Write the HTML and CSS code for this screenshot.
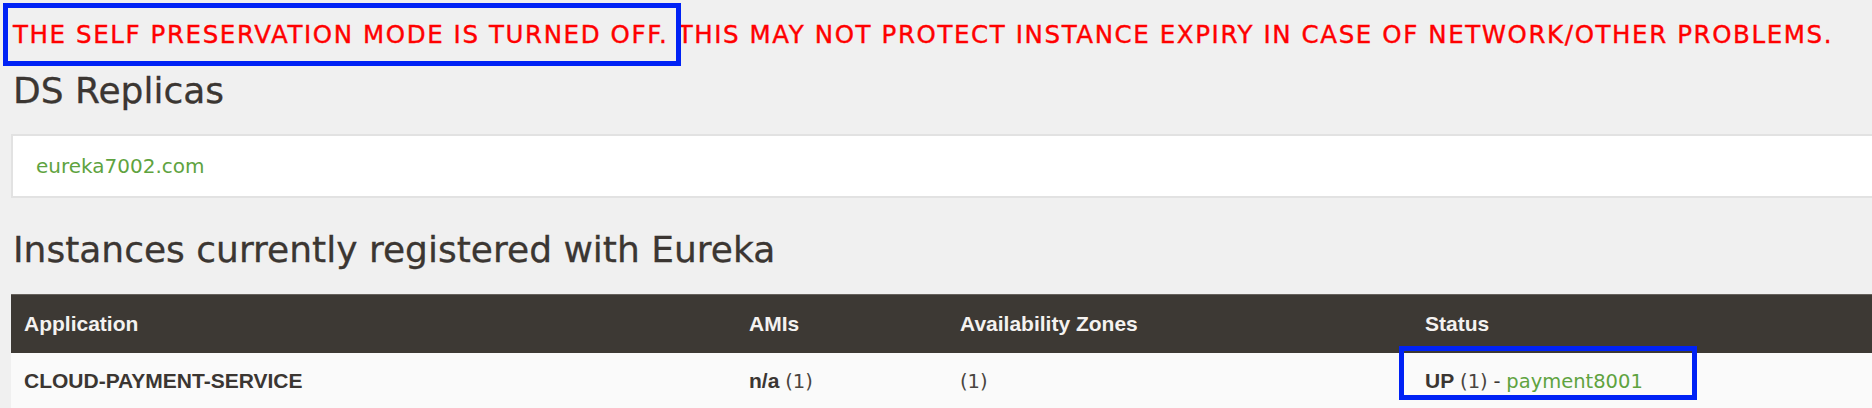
FILE: index.html
```html
<!DOCTYPE html>
<html lang="en">
<head>
<meta charset="utf-8">
<title>Eureka</title>
<link rel="stylesheet" href="styles.css">
</head>
<body>
<div class="page">
  <p class="warning"><span class="mark">THE SELF PRESERVATION MODE IS TURNED OFF.</span> THIS MAY NOT PROTECT INSTANCE EXPIRY IN CASE OF NETWORK/OTHER PROBLEMS.</p>
  <h2 class="title title-replicas">DS Replicas</h2>
  <ul class="replicas">
    <li><a class="link" href="#">eureka7002.com</a></li>
  </ul>
  <h2 class="title title-instances">Instances currently registered with Eureka</h2>
  <table class="instances">
    <colgroup>
      <col class="c-app">
      <col class="c-ami">
      <col class="c-zone">
      <col class="c-status">
    </colgroup>
    <thead>
      <tr>
        <th>Application</th>
        <th>AMIs</th>
        <th>Availability Zones</th>
        <th>Status</th>
      </tr>
    </thead>
    <tbody>
      <tr>
        <td><b>CLOUD-PAYMENT-SERVICE</b></td>
        <td><b>n/a</b> <span class="count">(1)</span></td>
        <td><span class="count">(1)</span></td>
        <td><span class="mark mark-status"><b>UP</b> <span class="count">(1)</span> - <a class="link link-instance" href="#">payment8001</a></span></td>
      </tr>
    </tbody>
  </table>
</div>
</body>
</html>
```

FILE: styles.css
```css
html, body {
  margin: 0;
  padding: 0;
  background: #f0f0f0;
  overflow: hidden;
}

.page {
  width: 1920px;
  padding-left: 11px;
  color: #3b3632;
  font-family: "DejaVu Sans", "Liberation Sans", sans-serif;
}

.warning {
  margin: 0;
  padding-top: 20px;
  padding-left: 2px;
  font-size: 24.5px;
  line-height: 30px;
  letter-spacing: 1.6px;
  color: #ff0000;
  -webkit-text-stroke: 0.4px #ff0000;
  white-space: nowrap;
}

.mark {
  position: relative;
}

.mark::after {
  content: "";
  position: absolute;
  border: 5px solid #0022f5;
  pointer-events: none;
}

.warning .mark::after {
  left: -10px;
  right: -13px;
  top: -17px;
  bottom: -17px;
}

.title {
  margin: 0;
  padding-left: 2px;
  font-size: 36px;
  font-weight: normal;
  line-height: 44px;
  color: #3b3632;
  -webkit-text-stroke: 0.3px #3b3632;
}

.title-replicas {
  margin-top: 19px;
}

.replicas {
  list-style: none;
  margin: 21px 0 0;
  padding: 0 0 0 23px;
  height: 60px;
  display: flex;
  align-items: center;
  background: #ffffff;
  border: 2px solid #e2e2e2;
  border-right: none;
}

.replicas li {
  font-size: 20px;
}

.link {
  color: #5fa33f;
  text-decoration: none;
}

.title-instances {
  margin-top: 30px;
}

.instances {
  margin-top: 22px;
  width: 1909px;
  border-collapse: collapse;
  table-layout: fixed;
  font-family: "Liberation Sans", Arial, sans-serif;
  font-size: 21px;
}

.c-app { width: 725px; }
.c-ami { width: 211px; }
.c-zone { width: 465px; }

.instances th {
  background: #3d3934;
  color: #f4f2f0;
  text-align: left;
  font-weight: bold;
  height: 58px;
  padding: 0 13px;
  border-top: 1px solid #66615c;
}

.instances td {
  background: #fafafa;
  height: 56px;
  padding: 0 13px;
  color: #3b3632;
}

.count {
  font-family: "DejaVu Sans", sans-serif;
  font-size: 19.5px;
  color: #4a4540;
}

.link-instance {
  font-family: "DejaVu Sans", sans-serif;
  font-size: 19.5px;
}

.mark-status::after {
  left: -26px;
  right: -54px;
  top: -23px;
  bottom: -8px;
}
```
